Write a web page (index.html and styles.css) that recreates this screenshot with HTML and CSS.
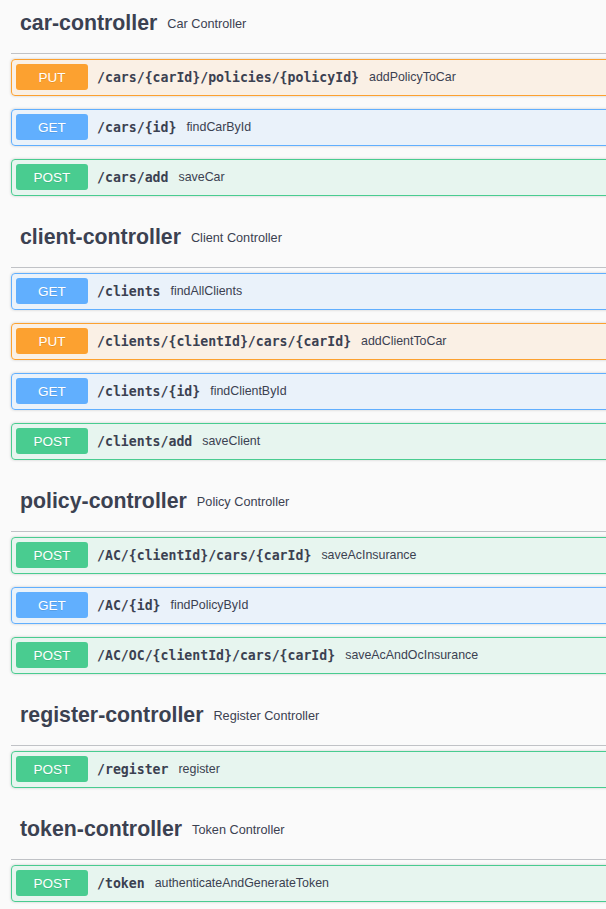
FILE: index.html
```html
<!DOCTYPE html>
<html lang="en">
<head>
<meta charset="utf-8">
<title>Swagger UI</title>
<link rel="stylesheet" href="styles.css">
</head>
<body>
<div class="page">
  <section class="tag-section">
    <h4 class="tag"><span class="tag-name">car-controller</span><small class="tag-desc">Car Controller</small></h4>
    <div class="op op-put"><span class="method">PUT</span><span class="path">/cars/{carId}/policies/{policyId}</span><span class="desc">addPolicyToCar</span></div>
    <div class="op op-get"><span class="method">GET</span><span class="path">/cars/{id}</span><span class="desc">findCarById</span></div>
    <div class="op op-post"><span class="method">POST</span><span class="path">/cars/add</span><span class="desc">saveCar</span></div>
  </section>
  <section class="tag-section">
    <h4 class="tag"><span class="tag-name">client-controller</span><small class="tag-desc">Client Controller</small></h4>
    <div class="op op-get"><span class="method">GET</span><span class="path">/clients</span><span class="desc">findAllClients</span></div>
    <div class="op op-put"><span class="method">PUT</span><span class="path">/clients/{clientId}/cars/{carId}</span><span class="desc">addClientToCar</span></div>
    <div class="op op-get"><span class="method">GET</span><span class="path">/clients/{id}</span><span class="desc">findClientById</span></div>
    <div class="op op-post"><span class="method">POST</span><span class="path">/clients/add</span><span class="desc">saveClient</span></div>
  </section>
  <section class="tag-section">
    <h4 class="tag"><span class="tag-name">policy-controller</span><small class="tag-desc">Policy Controller</small></h4>
    <div class="op op-post"><span class="method">POST</span><span class="path">/AC/{clientId}/cars/{carId}</span><span class="desc">saveAcInsurance</span></div>
    <div class="op op-get"><span class="method">GET</span><span class="path">/AC/{id}</span><span class="desc">findPolicyById</span></div>
    <div class="op op-post"><span class="method">POST</span><span class="path">/AC/OC/{clientId}/cars/{carId}</span><span class="desc">saveAcAndOcInsurance</span></div>
  </section>
  <section class="tag-section">
    <h4 class="tag"><span class="tag-name">register-controller</span><small class="tag-desc">Register Controller</small></h4>
    <div class="op op-post"><span class="method">POST</span><span class="path">/register</span><span class="desc">register</span></div>
  </section>
  <section class="tag-section">
    <h4 class="tag"><span class="tag-name">token-controller</span><small class="tag-desc">Token Controller</small></h4>
    <div class="op op-post"><span class="method">POST</span><span class="path">/token</span><span class="desc">authenticateAndGenerateToken</span></div>
  </section>
</div>
</body>
</html>
```

FILE: styles.css
```css
html, body {
  margin: 0;
  padding: 0;
  background: #fafafa;
  overflow: hidden;
}

.page {
  width: 640px;
  margin: -5.5px 0 0 11px;
  font-family: "Liberation Sans", Arial, sans-serif;
  color: #3b4151;
}

.tag {
  display: flex;
  align-items: center;
  box-sizing: border-box;
  height: 59.5px;
  margin: 0 0 4.5px;
  padding: 0 0 0 9px;
  border-bottom: 1px solid rgba(59, 65, 81, 0.3);
  font-weight: 700;
}

.tag-name {
  font-size: 21.3px;
  font-weight: 700;
  color: #3b4151;
}

.tag-desc {
  margin-left: 10px;
  font-size: 12.7px;
  font-weight: 400;
  color: #3b4151;
}

.op {
  display: flex;
  align-items: center;
  box-sizing: border-box;
  height: 37px;
  margin: 0 0 13px;
  padding: 0 4px;
  border: 1px solid #000;
  border-radius: 4px;
  box-shadow: 0 0 3px rgba(0, 0, 0, 0.19);
}

.method {
  display: flex;
  align-items: center;
  justify-content: center;
  width: 72px;
  height: 26px;
  flex: none;
  border-radius: 3px;
  color: #fff;
  font-size: 13.5px;
  font-weight: 400;
  text-shadow: 0 1px 0 rgba(0, 0, 0, 0.1);
}

.path {
  padding: 0 9px;
  font-family: "DejaVu Sans Mono", "Liberation Mono", monospace;
  font-size: 13.2px;
  font-weight: 700;
  color: #3b4151;
}

.desc {
  padding-left: 1px;
  font-size: 12.4px;
  color: #3b4151;
}

.op-put {
  background: rgba(252, 161, 48, 0.1);
  border-color: #fca130;
}
.op-put .method { background: #fca130; }

.op-get {
  background: rgba(97, 175, 254, 0.1);
  border-color: #61affe;
}
.op-get .method { background: #61affe; }

.op-post {
  background: rgba(73, 204, 144, 0.1);
  border-color: #49cc90;
}
.op-post .method { background: #49cc90; }
```
